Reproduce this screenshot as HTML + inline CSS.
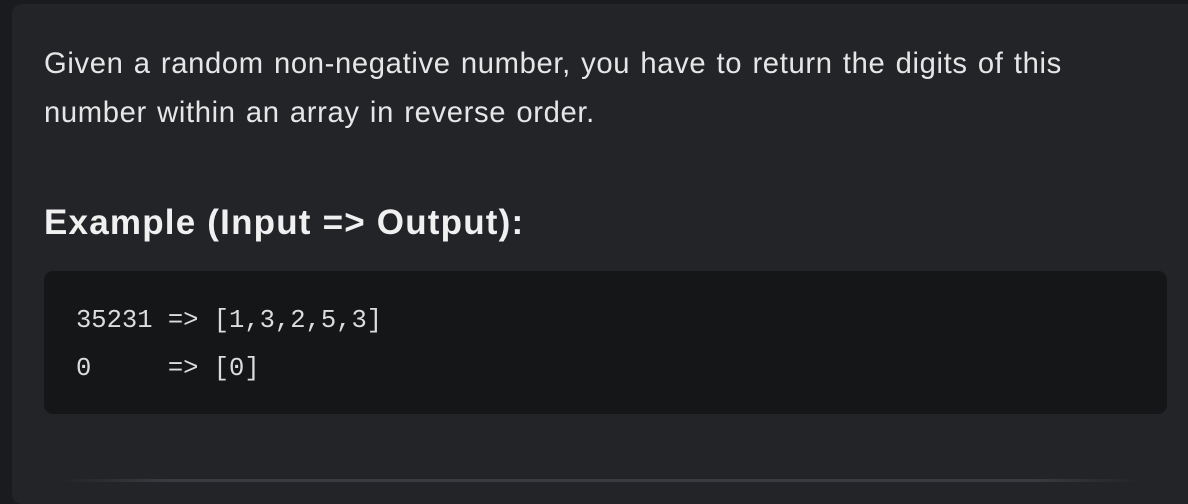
<!DOCTYPE html>
<html><head><style>
html,body{margin:0;padding:0;background:#1a1b1e;width:1188px;height:490px;overflow:hidden}
.card{position:absolute;left:12px;top:4px;width:1190px;height:500px;background:#232428;border-radius:10px}
p{position:absolute;left:32px;top:36px;margin:0;width:1070px;font-family:"Liberation Sans",sans-serif;font-size:29.2px;line-height:49px;color:#e6e6e6;letter-spacing:0.65px;word-spacing:1.5px}
h2{position:absolute;left:32px;top:199px;margin:0;font-family:"Liberation Sans",sans-serif;font-size:35px;font-weight:bold;color:#f0f0f0;letter-spacing:1.2px}
.code{position:absolute;left:32px;top:267px;width:1123px;height:143px;background:#151617;border-radius:9px}
pre{position:absolute;left:32px;top:26px;margin:0;font-family:"Liberation Mono",monospace;font-size:25.5px;line-height:48px;color:#dcdcdc}
.line{position:absolute;left:48px;top:475px;width:1080px;height:3px;background:linear-gradient(90deg,#232428,#3a3b40 10%,#3a3b40 90%,#232428)}
</style></head><body>
<div class="card">
<p>Given a random non-negative number, you have to return the digits of this number within an array in reverse order.</p>
<h2>Example (Input =&gt; Output):</h2>
<div class="code"><pre>35231 =&gt; [1,3,2,5,3]
0     =&gt; [0]</pre></div>
<div class="line"></div>
</div>
</body></html>
